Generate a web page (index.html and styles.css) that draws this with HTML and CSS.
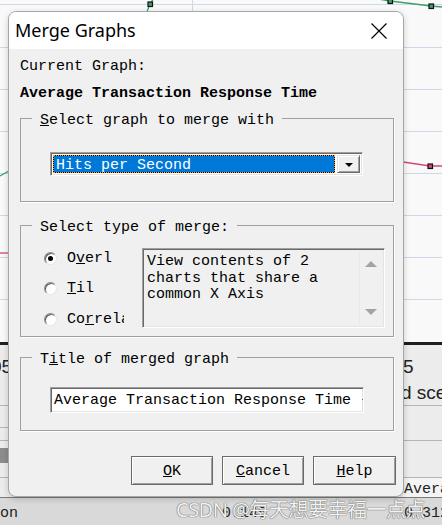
FILE: index.html
```html
<!DOCTYPE html>
<html>
<head>
<meta charset="utf-8">
<title>Merge Graphs</title>
<link rel="stylesheet" href="styles.css">
</head>
<body>
<div class="screen">
  <svg class="backdrop" width="442" height="525" viewBox="0 0 442 525">
    <rect x="0" y="0" width="442" height="343" fill="#f9f9f9"/>
    <g stroke="#cfd8e8" stroke-width="1">
      <line x1="0" y1="4.5" x2="442" y2="4.5"/>
      <line x1="0" y1="47.5" x2="442" y2="47.5"/>
      <line x1="0" y1="89.5" x2="442" y2="89.5"/>
      <line x1="0" y1="131.5" x2="442" y2="131.5"/>
      <line x1="0" y1="173.5" x2="442" y2="173.5"/>
      <line x1="0" y1="215.5" x2="442" y2="215.5"/>
      <line x1="0" y1="257.5" x2="442" y2="257.5"/>
      <line x1="0" y1="299.5" x2="442" y2="299.5"/>
      <line x1="192.5" y1="0" x2="192.5" y2="343"/>
    </g>
    <g fill="none" stroke="#3f9e6a" stroke-width="1.3">
      <polyline points="146,14 150,4 154,-2"/>
      <polyline points="372,-2 390,1 431,6 442,7"/>
      <polyline points="0,176 9,171"/>
    </g>
    <g fill="none" stroke="#d04a78" stroke-width="1.3">
      <polyline points="0,253 9,253"/>
      <polyline points="403,162 430,166 442,166"/>
    </g>
    <g fill="#3f9e6a" stroke="#111" stroke-width="1.2">
      <rect x="148" y="2" width="4.5" height="4.5"/>
      <rect x="388" y="-1" width="4.5" height="4.5"/>
      <rect x="429" y="4" width="4.5" height="4.5"/>
    </g>
    <rect x="428" y="164" width="4.5" height="4.5" fill="#d04a78" stroke="#111" stroke-width="1.2"/>
    <rect x="0" y="342" width="442" height="3" fill="#1e1e1e"/>
    <rect x="0" y="345" width="442" height="152" fill="#ececec"/>
    <g stroke="#b4b4b4" stroke-width="1">
      <line x1="0" y1="405.5" x2="442" y2="405.5"/>
      <line x1="0" y1="440.5" x2="442" y2="440.5"/>
      <line x1="0" y1="477.5" x2="442" y2="477.5"/>
      <line x1="0" y1="427.5" x2="8" y2="427.5"/>
    </g>
    <rect x="0" y="448" width="8" height="15" fill="#8c8c8c"/>
    <g font-family="Liberation Sans, Arial, sans-serif" font-size="19" fill="#222">
      <text x="-9" y="373">05</text>
      <text x="403" y="373">5</text>
      <text x="401" y="399">d sce</text>
    </g>
    <rect x="403" y="478" width="39" height="19" fill="#f4f4f4"/>
    <text x="404" y="493" font-family="Liberation Mono, monospace" font-size="15" fill="#222">Avera</text>
    <rect x="0" y="497" width="442" height="28" fill="#d9d9d9"/>
    <line x1="0" y1="497.5" x2="442" y2="497.5" stroke="#7a7a7a"/>
    <g font-family="Liberation Mono, monospace" font-size="15" fill="#222">
      <text x="0" y="517">on</text>
      <text x="222" y="517">0.145</text>
      <text x="404" y="517">0.312</text>
    </g>
  </svg>

  <div class="dialog">
    <div class="titlebar">
      <span class="title">Merge Graphs</span>
      <svg class="close" width="16" height="16" viewBox="0 0 16 16">
        <path d="M0.5 0.5 L15.5 15.5 M15.5 0.5 L0.5 15.5" stroke="#000" stroke-width="1.2" fill="none"/>
      </svg>
    </div>
    <div class="body">
      <div class="label">Current Graph:</div>
      <div class="current">Average Transaction Response Time</div>

      <fieldset class="group g1">
        <legend><u>S</u>elect graph to merge with</legend>
        <div class="g1-inner">
          <div class="combo sunken">
            <div class="combo-value">Hits per Second</div>
            <div class="combo-btn"><span class="tri-down"></span></div>
          </div>
        </div>
      </fieldset>

      <fieldset class="group g2">
        <legend>Select type of merge:</legend>
        <div class="g2-inner">
          <div class="radios">
            <div class="radio-item"><span class="radio checked"></span><span class="radio-label">O<u>v</u>erl</span></div>
            <div class="radio-item"><span class="radio"></span><span class="radio-label"><u>T</u>il</span></div>
            <div class="radio-item"><span class="radio"></span><span class="radio-label clip">Co<u>r</u>rela</span></div>
          </div>
          <div class="desc sunken">
            <div class="desc-text">View contents of 2 charts that share a common X Axis</div>
            <div class="scroll">
              <span class="arrow-up"></span>
              <span class="arrow-down"></span>
            </div>
          </div>
        </div>
      </fieldset>

      <fieldset class="group g3">
        <legend>T<u>i</u>tle of merged graph</legend>
        <div class="g3-inner">
          <div class="title-input sunken">Average Transaction Response Time - Hits per Second</div>
        </div>
      </fieldset>

      <div class="buttons">
        <div class="btn btn-ok"><u>O</u>K</div>
        <div class="btn btn-cancel"><u>C</u>ancel</div>
        <div class="btn btn-help"><u>H</u>elp</div>
      </div>
    </div>
  </div>

  <div class="watermark">CSDN @每天想要幸福一点点</div>
</div>
</body>
</html>
```

FILE: styles.css
```css
* { box-sizing: border-box; }
html, body { margin: 0; padding: 0; }
body {
  width: 442px;
  height: 525px;
  overflow: hidden;
  background: #f9f9f9;
  font-family: "Liberation Mono", "Courier New", monospace;
}
.screen { position: relative; width: 442px; height: 525px; overflow: hidden; }
.backdrop { position: absolute; left: 0; top: 0; display: block; }

.dialog {
  position: absolute;
  left: 8px;
  top: 11px;
  width: 396px;
  height: 486px;
  background: #f0f0f0;
  border: 1px solid #a6a6a6;
  border-radius: 8px;
  box-shadow: 0 2px 6px rgba(0, 0, 0, 0.18);
  overflow: hidden;
  display: flex;
  flex-direction: column;
}
.titlebar {
  flex: none;
  height: 37px;
  background: #fff;
  display: flex;
  align-items: center;
  justify-content: space-between;
  padding: 0 16px 2px 6px;
}
.title {
  font-family: "Segoe UI", "Noto Sans", "Open Sans", sans-serif;
  font-size: 18px;
  color: #000;
}
.close { display: block; margin-top: 2px; }

.body {
  flex: 1;
  padding-top: 10px;
  font-size: 15px;
  line-height: 16px;
  color: #000;
}
.label, .current { padding-left: 11px; white-space: nowrap; }
.current { margin-top: 11px; font-weight: bold; }

.group {
  margin: 6px 0 0 11px;
  width: 374px;
  min-width: 0;
  padding: 0;
  border: 1px solid #a0a0a0;
  box-shadow: 1px 1px 0 #fff;
}
.group legend {
  margin-left: 11px;
  padding: 5px 8px 0;
  line-height: 16px;
  white-space: nowrap;
}
.g2 { margin-top: 13px; }
.g3 { margin-top: 10px; }

.sunken {
  border: 1px solid;
  border-color: #a0a0a0 #fff #fff #a0a0a0;
  box-shadow: inset 1px 1px 0 #696969, inset -1px -1px 0 #e3e3e3;
}

.g1-inner { padding: 23px 0 25px 29px; }
.combo {
  width: 313px;
  height: 24px;
  display: flex;
  gap: 2px;
  padding: 2px 2px 2px 2px;
  background: #fff;
}
.combo-value {
  flex: 1;
  color: #fff;
  padding: 2px 0 0 2px;
  line-height: 16px;
  border: 1px dotted #f5a03a;
  background: linear-gradient(#0078d7, #0078d7) padding-box, #000 border-box;
  white-space: nowrap;
}
.combo-btn {
  width: 23px;
  background: #f0f0f0;
  border: 1px solid;
  border-color: #e3e3e3 #696969 #696969 #e3e3e3;
  box-shadow: inset 1px 1px 0 #fff, inset -1px -1px 0 #a0a0a0;
  display: flex;
  align-items: center;
  justify-content: center;
}
.tri-down {
  width: 0;
  height: 0;
  border-left: 4px solid transparent;
  border-right: 4px solid transparent;
  border-top: 4px solid #000;
  margin-top: 1px;
}

.g2-inner {
  display: flex;
  padding: 12px 0 8px 23px;
}
.radios {
  width: 98px;
  padding-top: 2px;
  display: flex;
  flex-direction: column;
  gap: 14.5px;
}
.radio-item {
  display: flex;
  align-items: center;
  gap: 10px;
  height: 16px;
}
.radio {
  flex: none;
  width: 13px;
  height: 13px;
  border-radius: 50%;
  background: #fff;
  border: 1px solid;
  border-color: #8a8a8a #e6e6e6 #e6e6e6 #8a8a8a;
  box-shadow: inset 1px 1px 0 #5a5a5a;
  display: flex;
  align-items: center;
  justify-content: center;
}
.radio.checked::after {
  content: "";
  width: 5px;
  height: 5px;
  border-radius: 50%;
  background: #000;
}
.radio-label { white-space: nowrap; padding-top: 1px; }
.radio-label.clip { width: 57px; overflow: hidden; }

.desc {
  width: 243px;
  height: 80px;
  background: #f0f0f0;
  display: flex;
  padding: 2px;
}
.desc-text {
  flex: 1;
  padding: 3px 0 0 2px;
  line-height: 16.6px;
}
.scroll {
  width: 23px;
  border-left: 1px solid #e8e8e8;
  display: flex;
  flex-direction: column;
  align-items: center;
  justify-content: space-between;
  padding: 10px 0 10px;
}
.arrow-up, .arrow-down {
  width: 0;
  height: 0;
  border-left: 6px solid transparent;
  border-right: 6px solid transparent;
}
.arrow-up { border-bottom: 6px solid #a3a3a3; }
.arrow-down { border-top: 6px solid #a3a3a3; }

.g3-inner { padding: 19px 0 17px 29px; }
.title-input {
  width: 314px;
  height: 26px;
  background: #fff;
  padding: 3px 0 0 3px;
  line-height: 20px;
  white-space: nowrap;
  overflow: hidden;
}

.buttons {
  display: flex;
  justify-content: flex-end;
  gap: 9px;
  margin-top: 25px;
  padding-right: 7px;
}
.btn {
  width: 82px;
  height: 29px;
  background: #f0f0f0;
  border: 1px solid #6a6a6a;
  box-shadow: inset 1px 1px 0 #fff, inset -1px -1px 0 #a0a0a0;
  display: flex;
  align-items: center;
  justify-content: center;
  line-height: 16px;
  padding-top: 2px;
}
.btn-help { width: 83px; }

.watermark {
  position: absolute;
  left: 176px;
  top: 498px;
  font-family: "Noto Sans", "Noto Sans CJK SC", sans-serif;
  font-size: 20px;
  line-height: 24px;
  color: #f2f2f2;
  text-shadow: 0 0 1px #555, 0 0 1px #555;
  white-space: nowrap;
  letter-spacing: -0.5px;
}
```
